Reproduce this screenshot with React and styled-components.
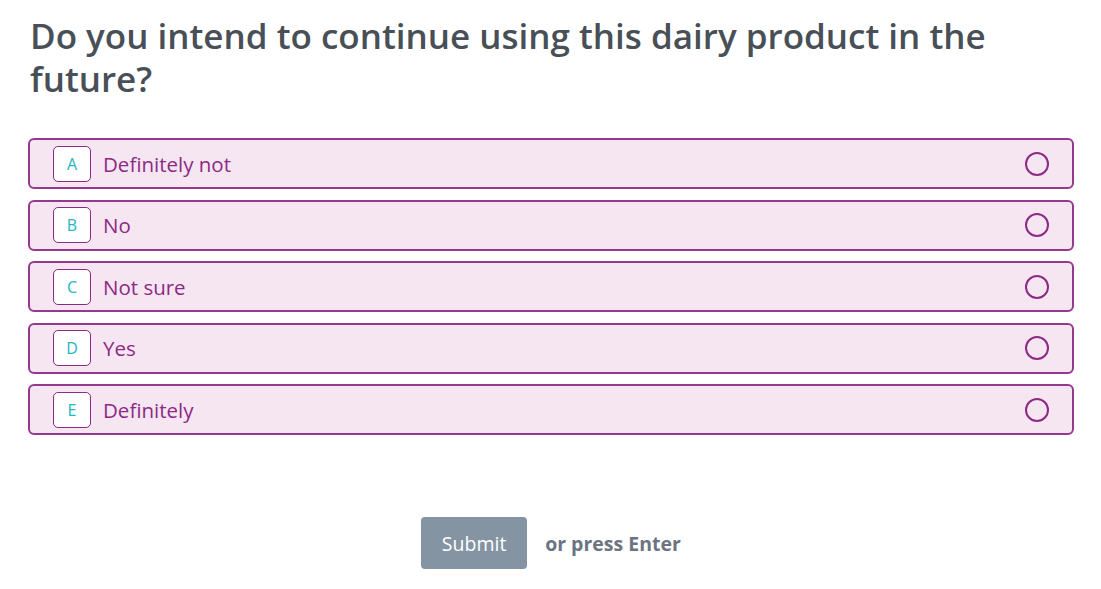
import React from "react"
import styled, { createGlobalStyle } from "styled-components"

const GlobalStyle = createGlobalStyle`
  body {
    margin: 0;
    background: #fff;
    font-family: "Open Sans", "Noto Sans", sans-serif;
  }
`

const Page = styled.div`
  padding: 14px 27px 0 28px;
`

const Question = styled.h1`
  margin: 0 0 38px 2px;
  font-size: 35px;
  line-height: 43px;
  font-weight: 600;
  color: #484f57;
`

const Options = styled.div`
  display: flex;
  flex-direction: column;
  gap: 10.5px;
`

const Option = styled.label`
  display: flex;
  align-items: center;
  height: 51px;
  box-sizing: border-box;
  padding: 0 23px 0 23px;
  background: #f5e6f1;
  border: 2px solid #95388e;
  border-radius: 6px;
  cursor: pointer;
`

const Key = styled.span`
  display: flex;
  align-items: center;
  justify-content: center;
  width: 38px;
  height: 36px;
  box-sizing: border-box;
  background: #fff;
  border: 1px solid #8c2a85;
  border-radius: 5px;
  color: #22b6c0;
  font-size: 16px;
`

const Label = styled.span`
  flex: 1;
  margin-left: 12px;
  font-size: 20.5px;
  color: #8c2a85;
`

const Radio = styled.span`
  width: 20px;
  height: 20px;
  border: 2px solid #8c2a85;
  border-radius: 50%;
`

const Footer = styled.div`
  display: flex;
  align-items: center;
  justify-content: center;
  gap: 18px;
  margin-top: 82px;
`

const Submit = styled.button`
  width: 106px;
  height: 52px;
  border: none;
  border-radius: 4px;
  background: #8594a3;
  color: #fff;
  font-family: inherit;
  font-size: 19.5px;
`

const Hint = styled.span`
  font-size: 19.5px;
  font-weight: 700;
  color: #6b7480;
`

const choices = ["Definitely not", "No", "Not sure", "Yes", "Definitely"]

export default function App() {
  return (
    <>
      <GlobalStyle />
      <Page>
        <Question>
          Do you intend to continue using this dairy product in the future?
        </Question>
        <Options>
          {choices.map((c, i) => (
            <Option key={c}>
              <Key>{String.fromCharCode(65 + i)}</Key>
              <Label>{c}</Label>
              <Radio />
            </Option>
          ))}
        </Options>
        <Footer>
          <Submit>Submit</Submit>
          <Hint>or press Enter</Hint>
        </Footer>
      </Page>
    </>
  )
}
